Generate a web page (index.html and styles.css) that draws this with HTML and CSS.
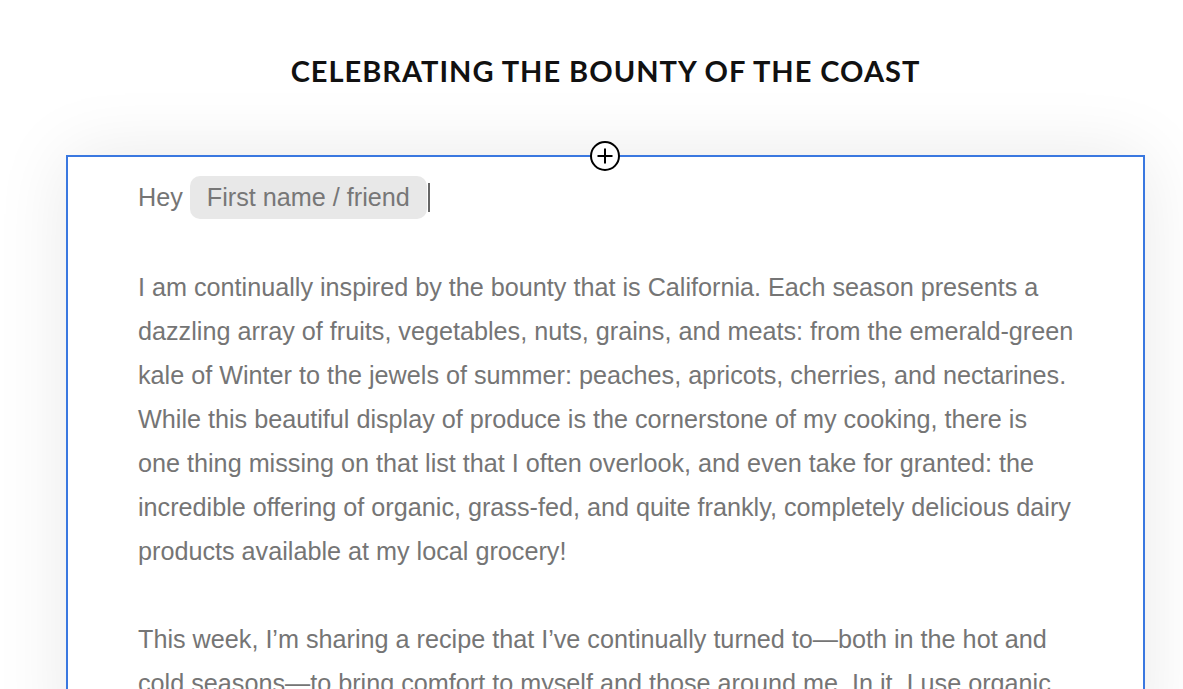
FILE: index.html
```html
<!DOCTYPE html>
<html>
<head>
<meta charset="utf-8">
<link rel="stylesheet" href="styles.css">
</head>
<body>
<div class="page">
  <h1 class="title">CELEBRATING THE BOUNTY OF THE COAST</h1>
  <div class="editor">
    <div class="add-btn">
      <svg width="32" height="32" viewBox="0 0 32 32"><circle cx="16" cy="16" r="14" fill="#fff" stroke="#000" stroke-width="2"/><path d="M16 8.5v15M8.5 16h15" stroke="#000" stroke-width="2" fill="none"/></svg>
    </div>
    <div class="greeting">Hey <span class="pill">First name / friend</span><span class="caret"></span></div>
    <p class="para">I am continually inspired by the bounty that is California. Each season presents a dazzling array of fruits, vegetables, nuts, grains, and meats: from the emerald-green kale of Winter to the jewels of summer: peaches, apricots, cherries, and nectarines. While this beautiful display of produce is the cornerstone of my cooking, there is one thing missing on that list that I often overlook, and even take for granted: the incredible offering of organic, grass-fed, and quite frankly, completely delicious dairy products available at my local grocery!</p>
    <p class="para">This week, I’m sharing a recipe that I’ve continually turned to—both in the hot and cold seasons—to bring comfort to myself and those around me. In it, I use organic butter, milk and cheese from local farms that I have come to love and trust.</p>
  </div>
</div>
</body>
</html>
```
FILE: styles.css
```css
html, body { margin: 0; padding: 0; background: #fff; overflow: hidden; }
.page { width: 1183px; height: 689px; overflow: hidden; }
.title {
  margin: 0 38px 0 66px;
  padding-top: 54px;
  height: 155px;
  box-sizing: border-box;
  text-align: center;
  font-family: "Lato", sans-serif;
  font-weight: 700;
  font-size: 29px;
  letter-spacing: 1px;
  color: #111;
  line-height: 34px;
}
.editor {
  position: relative;
  margin: 0 38px 0 66px;
  border: 2px solid #3a78e0;
  padding: 18px 68px 0 70px;
  box-shadow: 0 0 70px rgba(0,0,0,0.09);
  font-family: "Liberation Sans", Arial, sans-serif;
  color: #757575;
  font-size: 25.2px;
}
.add-btn {
  position: absolute;
  top: -17px;
  left: 521px;
  width: 32px;
  height: 32px;
}
.add-btn svg { display: block; }
.greeting {
  display: flex;
  align-items: center;
  height: 44px;
}
.pill {
  background: #e8e8e8;
  border-radius: 10px;
  padding: 0 17px;
  height: 43px;
  line-height: 43px;
  margin-left: 7px;
  color: #777;
}
.caret {
  width: 2px;
  height: 29px;
  background: #666;
  margin-left: 1px;
}
.para {
  margin: 46px 0 0 0;
  line-height: 44px;
}
.para + .para { margin-top: 44px; }
```
